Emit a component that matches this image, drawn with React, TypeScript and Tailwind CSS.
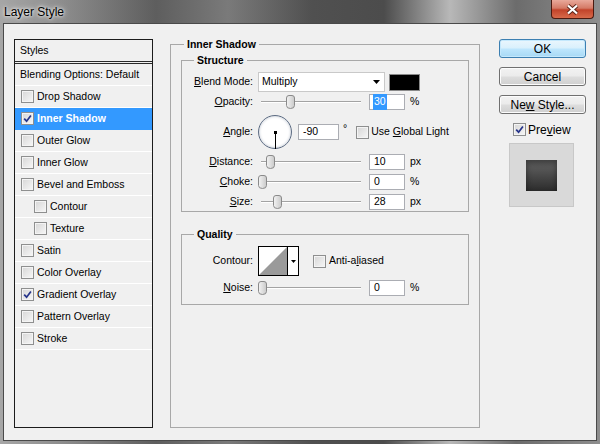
import React from "react";

const STYLES = [
  { label: "Drop Shadow" },
  { label: "Inner Shadow", checked: true, active: true },
  { label: "Outer Glow" },
  { label: "Inner Glow" },
  { label: "Bevel and Emboss" },
  { label: "Contour", indent: true },
  { label: "Texture", indent: true },
  { label: "Satin" },
  { label: "Color Overlay" },
  { label: "Gradient Overlay", checked: true },
  { label: "Pattern Overlay" },
  { label: "Stroke" },
];

function Check({ checked = false }: { checked?: boolean }) {
  return (
    <span className="flex h-[13px] w-[13px] shrink-0 items-center justify-center border border-[#8e8f8f] bg-[linear-gradient(135deg,#d6d6d6,#f7f7f7)] shadow-[inset_0_0_0_1px_#f4f4f4]">
      {checked && (
        <svg width="9" height="9" viewBox="0 0 9 9">
          <path d="M1.2 4.6 L3.6 7.2 L7.9 1.4" fill="none" stroke="#26348a" strokeWidth="1.7" />
        </svg>
      )}
    </span>
  );
}

function Slider({ at }: { at: number }) {
  return (
    <div className="relative h-[16px] w-[103px] shrink-0">
      <div className="absolute left-[3px] right-0 top-[7px] h-[2px] border-t border-[#a3a3a3] bg-white" />
      <svg className="absolute top-[1px]" style={{ left: at }} width="9" height="14" viewBox="0 0 9 14">
        <defs>
          <linearGradient id="thumb" x1="0" x2="1" y1="0" y2="0">
            <stop offset="0" stopColor="#f4f4f4" />
            <stop offset="1" stopColor="#c9c9c9" />
          </linearGradient>
        </defs>
        <path d="M0.5 3 Q0.5 0.5 3 0.5 H6 Q8.5 0.5 8.5 3 V10.5 Q8.5 13.5 4.5 13.5 Q0.5 13.5 0.5 10.5 Z" fill="url(#thumb)" stroke="#8a8a8a" />
      </svg>
    </div>
  );
}

function NumBox({ children, w = 36 }: { children: React.ReactNode; w?: number }) {
  return (
    <div
      className="flex h-[16px] shrink-0 items-center border border-[#abadb3] bg-white pl-[4px] text-[10.5px]"
      style={{ width: w }}
    >
      {children}
    </div>
  );
}

function Label({ children }: { children: React.ReactNode }) {
  return <div className="w-[72px] shrink-0 pr-px text-right text-[10.5px]">{children}</div>;
}

function SliderRow({ label, at, value, unit, h = 20 }: { label: React.ReactNode; at: number; value: string; unit: string; h?: number }) {
  return (
    <div className="flex items-center" style={{ height: h }}>
      <Label>{label}</Label>
      <div className="ml-[4px]">
        <Slider at={at} />
      </div>
      <div className="ml-[8px]">
        <NumBox>{value}</NumBox>
      </div>
      <span className="ml-[5px] text-[10.5px]">{unit}</span>
    </div>
  );
}

function StyleList() {
  return (
    <div className="h-[389px] w-[139px] shrink-0 border border-[#1c1c1c] bg-[#f0f0f0] text-[10.5px]">
      <div className="flex h-[21px] items-center pl-[5px]">Styles</div>
      <div className="h-[3px] border-y border-[#2a2a2a] bg-[#f0f0f0]" />
      <div className="flex h-[22px] items-center border-b border-white pl-[5px]">Blending Options: Default</div>
      {STYLES.map((s) => (
        <div
          key={s.label}
          className={
            "flex h-[22px] items-center gap-[3px] border-b " +
            (s.active ? "border-[#3399ff] bg-[#3399ff] font-bold text-white" : "border-white") +
            (s.indent ? " pl-[19px]" : " pl-[6px]")
          }
        >
          <Check checked={s.checked} />
          <span>{s.label}</span>
        </div>
      ))}
    </div>
  );
}

function Options() {
  return (
    <fieldset className="ml-[17px] -mt-px h-[390px] w-[310px] min-w-0 shrink-0 border border-[#a8a8a8] p-0">
      <legend className="ml-[13px] px-[3px] text-[10.5px] font-bold leading-[12px]">Inner Shadow</legend>

      <fieldset className="ml-[10px] mt-[4px] w-[288px] min-w-0 border border-[#a8a8a8] p-0">
        <legend className="ml-[12px] px-[3px] text-[10.5px] font-bold leading-[12px]">Structure</legend>

        <div className="mt-[6px] flex h-[20px] items-center">
          <Label>
            <u>B</u>lend Mode:
          </Label>
          <div className="ml-[4px] flex h-[20px] w-[127px] items-center justify-between border border-[#c9c9c9] bg-white pl-[3px] pr-[4px] text-[10.5px]">
            <span>Multiply</span>
            <svg width="7" height="4" viewBox="0 0 7 4">
              <path d="M0 0 H7 L3.5 4 Z" fill="#000" />
            </svg>
          </div>
          <div className="ml-[4px] h-[17px] w-[31px] border border-[#8a8a8a] bg-black" />
        </div>

        <div className="flex h-[20px] items-center">
          <Label>
            <u>O</u>pacity:
          </Label>
          <div className="ml-[4px]">
            <Slider at={28} />
          </div>
          <div className="ml-[8px]">
            <NumBox>
              <span className="-ml-[1px] bg-[#3399ff] px-[1px] text-white">30</span>
            </NumBox>
          </div>
          <span className="ml-[5px] text-[10.5px]">%</span>
        </div>

        <div className="flex h-[40px] items-center">
          <Label>
            <u>A</u>ngle:
          </Label>
          <div className="relative ml-[4px] h-[34px] w-[34px] shrink-0 rounded-full border border-[#5d6c83] bg-white shadow-[inset_0_0_3px_#b5bcc8]">
            <div className="absolute left-[15px] top-[15px] h-[3px] w-[3px] bg-black" />
            <div className="absolute left-[16px] top-[16px] h-[17px] w-px bg-black" />
          </div>
          <div className="ml-[6px]">
            <NumBox w={41}>-90</NumBox>
          </div>
          <span className="ml-[4px] -mt-[6px] text-[10.5px]">°</span>
          <div className="ml-[9px]">
            <Check />
          </div>
          <span className="ml-[2px] text-[10.5px]">
            Use <u>G</u>lobal Light
          </span>
        </div>

        <SliderRow label={<><u>D</u>istance:</>} at={8} value="10" unit="px" />
        <SliderRow label={<><u>C</u>hoke:</>} at={0} value="0" unit="%" />
        <SliderRow label={<><u>S</u>ize:</>} at={15} value="28" unit="px" h={19} />
      </fieldset>

      <fieldset className="ml-[10px] mt-[16px] w-[288px] min-w-0 border border-[#a8a8a8] p-0 pb-[4px]">
        <legend className="ml-[12px] px-[3px] text-[10.5px] font-bold leading-[12px]">Quality</legend>

        <div className="mt-[6px] flex h-[30px] items-center">
          <Label>Contour:</Label>
          <div className="ml-[4px] flex h-[30px] w-[41px] border border-black bg-white">
            <svg width="28" height="28" viewBox="0 0 28 28" className="shrink-0">
              <rect x="0" y="0" width="28" height="28" fill="#fff" />
              <path d="M0 28 L28 0 V28 Z" fill="#9a9a9a" />
            </svg>
            <div className="flex flex-1 items-center justify-center border-l border-black">
              <svg width="5" height="3" viewBox="0 0 5 3">
                <path d="M0 0 H5 L2.5 3 Z" fill="#000" />
              </svg>
            </div>
          </div>
          <div className="ml-[14px]">
            <Check />
          </div>
          <span className="ml-[3px] text-[10.5px]">
            Anti-a<u>l</u>iased
          </span>
        </div>

        <div className="mt-[4px]">
          <SliderRow label={<><u>N</u>oise:</>} at={0} value="0" unit="%" h={16} />
        </div>
        <div className="h-[4px]" />
      </fieldset>
    </fieldset>
  );
}

function Btn({ children, primary = false }: { children: React.ReactNode; primary?: boolean }) {
  return (
    <div
      className={
        "flex h-[19px] w-[87px] items-center justify-center rounded-[3px] border text-[12px] " +
        (primary
          ? "border-[#3c7fb1] bg-[linear-gradient(#eaf6fd_0%,#d9f0fc_48%,#bee6fd_52%,#a7d9f5_100%)] shadow-[inset_0_0_0_1px_#c4e8fc]"
          : "border-[#707070] bg-[linear-gradient(#f2f2f2_0%,#ebebeb_48%,#dddddd_52%,#cfcfcf_100%)] shadow-[inset_0_0_0_1px_#fcfcfc]")
      }
    >
      {children}
    </div>
  );
}

function Actions() {
  return (
    <div className="ml-[19px] flex w-[87px] shrink-0 flex-col">
      <Btn primary>OK</Btn>
      <div className="mt-[9px]">
        <Btn>Cancel</Btn>
      </div>
      <div className="mt-[9px]">
        <Btn>
          <span>
            Ne<u>w</u> Style...
          </span>
        </Btn>
      </div>
      <div className="ml-[14px] mt-[9px] flex h-[13px] items-center gap-[2px] text-[12px]">
        <Check checked />
        <span>
          Pre<u>v</u>iew
        </span>
      </div>
      <div className="ml-[10px] mt-[7px] flex h-[64px] w-[65px] items-center justify-center border border-[#c8c8c8] bg-[#d9d9d9]">
        <div className="h-[31px] w-[31px] bg-[linear-gradient(#666666,#2c2c2c)] shadow-[inset_0_3px_6px_rgba(0,0,0,0.45)]" />
      </div>
    </div>
  );
}

export default function App() {
  return (
    <div className="relative h-[444px] w-[600px] overflow-hidden bg-[linear-gradient(90deg,#a6a6a6_0%,#8e8e8e_10%,#5e5e5e_26%,#7a7a7a_38%,#505050_52%,#4c4c4c_64%,#b8b8b8_75%,#6c6c6c_86%,#8e8e8e_100%)] font-['Liberation_Sans',Arial,sans-serif] text-black">
      <div className="flex h-[23px] items-center pl-[4px] text-[12px] [text-shadow:0_0_6px_#ffffff,0_0_3px_#ffffff]">
        Layer Style
      </div>
      <div className="absolute right-[6px] top-0 flex h-[19px] w-[43px] items-center justify-center rounded-b-[4px] border border-t-0 border-[#4b1a10] bg-[linear-gradient(#e9a99b_0%,#d47a66_45%,#c2432a_55%,#d86a4a_100%)]">
        <svg width="13" height="11" viewBox="0 0 13 11">
          <path d="M2 1.5 L11 9.5 M11 1.5 L2 9.5" stroke="#5a2418" strokeWidth="4" />
          <path d="M2 1.5 L11 9.5 M11 1.5 L2 9.5" stroke="#ffffff" strokeWidth="2.2" />
        </svg>
      </div>
      <div className="mx-[3px] h-[418px] border border-[#4a4a4a] bg-[#f0f0f0]">
        <div className="flex pl-[10px] pt-[15px]">
          <StyleList />
          <Options />
          <Actions />
        </div>
      </div>
    </div>
  );
}
